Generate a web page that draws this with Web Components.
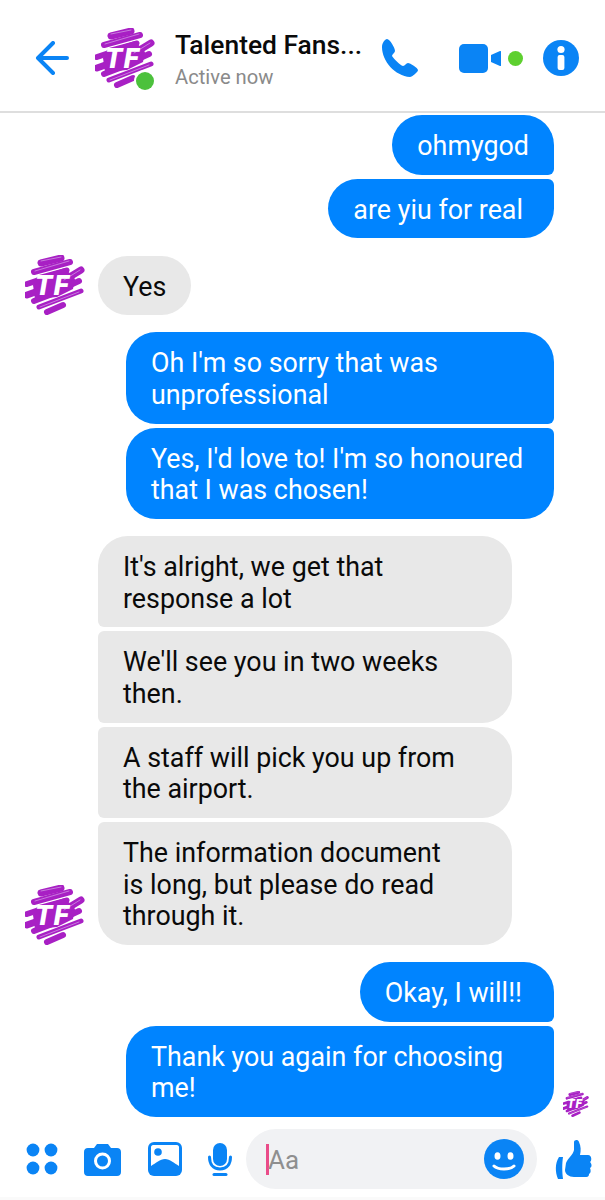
<!DOCTYPE html>
<html>
<head>
<meta charset="utf-8">
<title>Messenger chat</title>
<style>
  html, body { margin: 0; background: #fff; }
  body { font-family: Roboto, "Noto Sans", sans-serif; }
</style>
</head>
<body>
<chat-app>
  <chat-header slot="header" name="Talented Fans..." status="Active now"></chat-header>

  <chat-group side="me">
    <chat-bubble side="me" pos="first">ohmygod</chat-bubble>
    <chat-bubble side="me" pos="last" style="padding-right:31px">are yiu for real</chat-bubble>
  </chat-group>

  <chat-group side="them" avatar>
    <chat-bubble side="them">Yes</chat-bubble>
  </chat-group>

  <chat-group side="me">
    <chat-bubble side="me" pos="first">Oh I'm so sorry that was unprofessional</chat-bubble>
    <chat-bubble side="me" pos="last">Yes, I'd love to! I'm so honoured that I was chosen!</chat-bubble>
  </chat-group>

  <chat-group side="them" avatar>
    <chat-bubble side="them" pos="first">It's alright, we get that response a lot</chat-bubble>
    <chat-bubble side="them" pos="mid">We'll see you in two weeks then.</chat-bubble>
    <chat-bubble side="them" pos="mid">A staff will pick you up from the airport.</chat-bubble>
    <chat-bubble side="them" pos="last">The information document is long, but please do read through it.</chat-bubble>
  </chat-group>

  <chat-group side="me">
    <chat-bubble side="me" pos="first" style="padding-right:32px">Okay, I will!!</chat-bubble>
    <chat-bubble side="me" pos="last">Thank you again for choosing me!</chat-bubble>
    <tf-avatar slot="receipt" size="26"></tf-avatar>
  </chat-group>

  <chat-composer slot="footer"></chat-composer>
</chat-app>

<script>
(function () {
  "use strict";

  // Scribble logo, used at two sizes
  class TfAvatar extends HTMLElement {
    connectedCallback() {
      const size = this.getAttribute("size") || 60;
      this.attachShadow({ mode: "open" }).innerHTML = `
        <style>
          :host { display: block; width: ${size}px; height: ${size}px; flex: none; }
          svg { display: block; width: 100%; height: 100%; }
          text { font: italic 900 28px Roboto, sans-serif; letter-spacing: 1.500px; fill: #fff; }
        </style>
        <svg viewBox="0 0 60 60" aria-hidden="true">
          <path fill="#a820c4" d="M14 20 L40 13 L50 24 L48 34 L32 42 L10 44 L8 30 Z"/>
          <g fill="none" stroke="#a820c4" stroke-linecap="round">
            <path stroke-width="7" d="M16 8 L36 3"/>
            <path stroke-width="6" d="M9 17 L45 7"/>
            <path stroke-width="5" d="M14 24 L42 15"/>
            <path stroke-width="7" d="M38 26 L56 15"/>
            <path stroke-width="6" d="M2 29 L14 25"/>
            <path stroke-width="7" d="M2 40 L16 35"/>
            <path stroke-width="6" d="M30 37 L54 26"/>
            <path stroke-width="6" d="M9 46 L30 38"/>
            <path stroke-width="5" d="M14 52 L56 36"/>
            <path stroke-width="6" d="M22 57 L38 50"/>
          </g>
          <g fill="none" stroke="#c77bdd" stroke-width="1" stroke-linecap="round">
            <path d="M16 6 L36 2"/>
            <path d="M10 16 L44 6"/>
            <path d="M39 25 L55 15"/>
            <path d="M15 52 L54 37"/>
          </g>
          <text x="10" y="40">TF</text>
        </svg>`;
    }
  }

  class ChatHeader extends HTMLElement {
    connectedCallback() {
      this.attachShadow({ mode: "open" }).innerHTML = `
        <style>
          :host { display: flex; align-items: center; height: 113px; box-sizing: border-box;
                  border-bottom: 2px solid #dedede; padding: 5px 26px 0 35px; background: #fff; }
          svg { display: block; flex: none; }
          .who { position: relative; margin-left: 25px; flex: none; }
          .dot { position: absolute; right: 1px; bottom: -2px; width: 18px; height: 18px;
                 background: #4cc13c; border-radius: 50%; box-shadow: 0 0 0 2px #fff; }
          .names { margin: 6px 0 0 20px; width: 206px; flex: none; }
          .name { font-size: 26.4px; font-weight: 500; line-height: 32px; color: #0a0a0a; white-space: nowrap; }
          .status { font-size: 20.2px; line-height: 32px; color: #8a8a8a; }
          .video { margin-left: 40px; }
          .live { width: 15px; height: 15px; background: #5ed02f; border-radius: 50%; margin-left: 7px; flex: none; }
          .info { margin-left: 20px; }
        </style>
        <svg width="35" height="34" viewBox="0 0 35 34" fill="none" stroke="#0a84f5" stroke-width="4" stroke-linecap="round" stroke-linejoin="round">
          <path d="M32 17 H4 M18 2 L3 17 L18 32"/>
        </svg>
        <div class="who">
          <tf-avatar size="60"></tf-avatar>
          <div class="dot"></div>
        </div>
        <div class="names">
          <div class="name">${this.getAttribute("name")}</div>
          <div class="status">${this.getAttribute("status")}</div>
        </div>
        <svg width="38" height="40" viewBox="0 0 38 40" fill="#0a84f5">
          <path d="M1 9 C1 23 14 38 29 39 C31 39 37 34 37 32 C37 30 29 25 27 25 C25 25 24 28 22 28 C19 27 13 21 11 18 C11 16 14 15 14 13 C14 10 9 1 6 1 C4 1 1 5 1 9 Z"/>
        </svg>
        <svg class="video" width="42" height="29" viewBox="0 0 42 29" fill="#0a84f5">
          <rect width="29" height="29" rx="5"/>
          <path d="M32 11 L41 7 C42 7 42 7 42 8 V21 C42 22 42 22 41 22 L32 18 Z"/>
        </svg>
        <div class="live"></div>
        <svg class="info" width="36" height="36" viewBox="0 0 36 36">
          <circle cx="18" cy="18" r="18" fill="#0a84f5"/>
          <circle cx="18" cy="9.500" r="3.600" fill="#fff"/>
          <rect x="14.600" y="15" width="6.800" height="15" rx="2" fill="#fff"/>
        </svg>`;
    }
  }

  class ChatBubble extends HTMLElement {
    constructor() {
      super();
      this.attachShadow({ mode: "open" }).innerHTML = `
        <style>
          :host { display: block; box-sizing: border-box; padding: 16px 25px 12px; font-size: 26.85px;
                  line-height: 31.67px; border-radius: 30px; }
          :host([side="me"]) { background: #0084ff; color: #fff; max-width: 428px; }
          :host([side="them"]) { background: #e8e8e8; color: #0a0a0a; }
          /* grouped replies keep the full width but wrap early */
          :host([side="them"][pos]) { width: 414px; padding-right: 50px; }
          :host([side="me"][pos="first"]) { border-bottom-right-radius: 6px; }
          :host([side="me"][pos="last"]) { border-top-right-radius: 6px; }
          :host([side="them"][pos="first"]) { border-bottom-left-radius: 6px; }
          :host([side="them"][pos="mid"]) { border-top-left-radius: 6px; border-bottom-left-radius: 6px; }
          :host([side="them"][pos="last"]) { border-top-left-radius: 6px; }
        </style>
        <slot></slot>`;
    }
  }

  class ChatGroup extends HTMLElement {
    connectedCallback() {
      const face = this.hasAttribute("avatar") ? `<tf-avatar class="face" size="60"></tf-avatar>` : "";
      this.attachShadow({ mode: "open" }).innerHTML = `
        <style>
          :host { display: flex; position: relative; align-items: flex-end; }
          :host([side="me"]) { justify-content: flex-end; padding-right: 51px; }
          :host([side="them"]) { padding-left: 25px; }
          .face { margin-right: 13px; }
          .col { display: flex; flex-direction: column; gap: 4px; }
          :host([side="me"]) .col { align-items: flex-end; }
          :host([side="them"]) .col { align-items: flex-start; }
          ::slotted([slot="receipt"]) { position: absolute; right: 16px; bottom: 0; }
        </style>
        ${face}
        <div class="col"><slot></slot></div>
        <slot name="receipt"></slot>`;
    }
  }

  class ChatComposer extends HTMLElement {
    connectedCallback() {
      this.attachShadow({ mode: "open" }).innerHTML = `
        <style>
          :host { display: flex; align-items: center; height: 60px; padding-left: 26px; }
          svg { display: block; flex: none; }
          .cam { margin-left: 26px; }
          .pic { margin-left: 27px; }
          .mic { margin-left: 26px; }
          .box { flex: none; width: 291px; height: 60px; margin-left: 14px; box-sizing: border-box;
                 border-radius: 30px; background: #f1f2f4; display: flex; align-items: center;
                 padding: 0 13px 0 20px; }
          .caret { width: 3px; height: 31px; background: #ea4c89; flex: none; }
          .hint { flex: 1; font-size: 26px; color: #8f8f8f; margin: 2px 0 0 -1px; }
          .like { margin-left: 15px; }
        </style>
        <svg width="32" height="32" viewBox="0 0 32 32" fill="#0a84f5">
          <circle cx="7" cy="7" r="6.400"/><circle cx="25" cy="7" r="6.400"/>
          <circle cx="7" cy="25" r="6.400"/><circle cx="25" cy="25" r="6.400"/>
        </svg>
        <svg class="cam" width="37" height="33" viewBox="0 0 37 33">
          <path fill="#0a84f5" d="M4 5 H10 L13 1 H24 L27 5 H33 C35.500 5 37 6.500 37 9 V29 C37 31.500 35.500 33 33 33 H4 C1.500 33 0 31.500 0 29 V9 C0 6.500 1.500 5 4 5 Z"/>
          <circle cx="18.500" cy="18" r="7" fill="none" stroke="#fff" stroke-width="3"/>
        </svg>
        <svg class="pic" width="34" height="34" viewBox="0 0 34 34">
          <rect width="34" height="34" rx="6" fill="#0a84f5"/>
          <path fill="#fff" d="M5 3 H29 C30 3 31 4 31 5 V24 C26 21 22 17 17 17 C12 17 8 21 3 24 V5 C3 4 4 3 5 3 Z"/>
          <circle cx="10" cy="10" r="3.800" fill="#0a84f5"/>
        </svg>
        <svg class="mic" width="24" height="33" viewBox="0 0 24 33" fill="none">
          <rect x="5" y="0" width="14" height="23" rx="7" fill="#0a84f5"/>
          <path d="M1.500 14 C1.500 21 5 26 12 26 C19 26 22.500 21 22.500 14" stroke="#0a84f5" stroke-width="3" stroke-linecap="round"/>
          <path d="M6 31.500 H18" stroke="#0a84f5" stroke-width="3" stroke-linecap="round"/>
        </svg>
        <div class="box">
          <div class="caret"></div>
          <div class="hint">Aa</div>
          <svg width="40" height="40" viewBox="0 0 40 40">
            <circle cx="20" cy="20" r="20" fill="#0a84f5"/>
            <ellipse cx="13.500" cy="17" rx="3" ry="3.800" fill="#fff"/>
            <ellipse cx="26.500" cy="17" rx="3" ry="3.800" fill="#fff"/>
            <path d="M10 27 C14 31 26 31 30 27" fill="none" stroke="#fff" stroke-width="3" stroke-linecap="round"/>
          </svg>
        </div>
        <svg class="like" width="42" height="42" viewBox="550 1138 42 42" fill="#0a84f5">
          <path d="M557 1157 H561 C560 1163 560 1172 561 1179 H556 C553 1172 553 1163 557 1157 Z"/>
          <path d="M564 1163 C566 1158 571 1155 572 1150 L572 1142 C572 1140 576 1139 577 1142 C579 1146 579 1151 578 1155 L586 1155 C590 1155 590 1161 588 1162 C590 1164 590 1167 588 1168 C589 1170 589 1173 587 1174 C587 1177 585 1177 583 1177 L572 1177 C567 1177 563 1174 563 1170 Z"/>
        </svg>`;
    }
  }

  class ChatApp extends HTMLElement {
    constructor() {
      super();
      this.attachShadow({ mode: "open" }).innerHTML = `
        <style>
          :host { display: flex; flex-direction: column; width: 605px; height: 1200px; overflow: hidden;
                  font-family: Roboto, "Noto Sans", sans-serif; background: #fff; }
          .thread { display: flex; flex-direction: column; gap: 17px; padding-top: 2px; height: 1016px; box-sizing: border-box; }
          .strip { flex: 1; margin-top: 8px; background: #fafafa; }
        </style>
        <slot name="header"></slot>
        <div class="thread"><slot></slot></div>
        <slot name="footer"></slot>
        <div class="strip"></div>`;
    }
  }

  customElements.define("tf-avatar", TfAvatar);
  customElements.define("chat-header", ChatHeader);
  customElements.define("chat-bubble", ChatBubble);
  customElements.define("chat-group", ChatGroup);
  customElements.define("chat-composer", ChatComposer);
  customElements.define("chat-app", ChatApp);
})();
</script>
</body>
</html>
